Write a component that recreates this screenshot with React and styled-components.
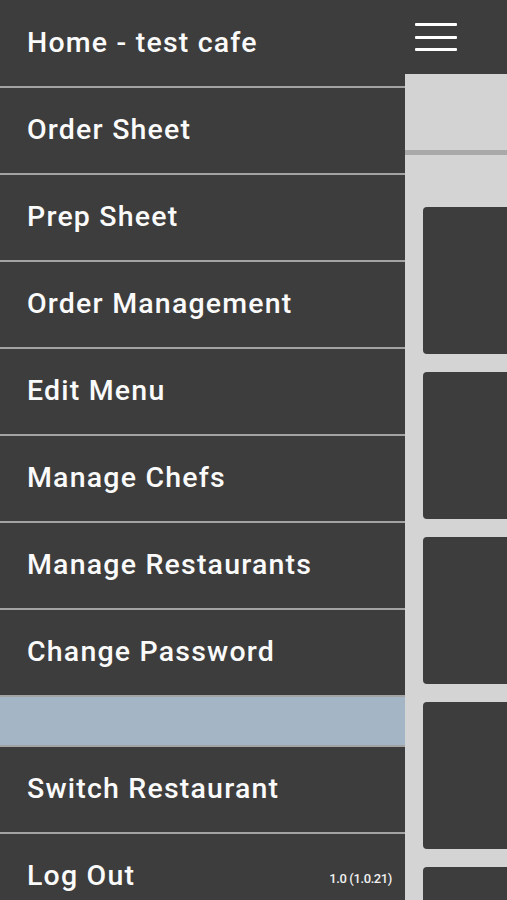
import React from 'react';
import styled, { createGlobalStyle } from 'styled-components';

const GlobalStyle = createGlobalStyle`
  html, body {
    margin: 0;
    padding: 0;
    background: #3d3d3d;
    overflow: hidden;
  }
  * { box-sizing: border-box; }
`;

const menuItems = [
  'Order Sheet',
  'Prep Sheet',
  'Order Management',
  'Edit Menu',
  'Manage Chefs',
  'Manage Restaurants',
  'Change Password',
];

const App = () => (
  <>
    <GlobalStyle />
    <Screen>
      <Drawer>
        <Row $height={86}>
          <Label>Home - test cafe</Label>
        </Row>
        {menuItems.map((item) => (
          <Row key={item} $height={87} $divider>
            <Label>{item}</Label>
          </Row>
        ))}
        <Spacer />
        <Row $height={87} $divider>
          <Label>Switch Restaurant</Label>
        </Row>
        <Row $height={87} $divider>
          <Label>Log Out</Label>
          <Version>1.0 (1.0.21)</Version>
        </Row>
      </Drawer>
      <Main>
        <TopBar>
          <Burger aria-label="menu">
            <span />
            <span />
            <span />
          </Burger>
        </TopBar>
        <SubBar />
        <CardList>
          <Card />
          <Card />
          <Card />
          <Card />
          <Card />
        </CardList>
      </Main>
    </Screen>
  </>
);

const Screen = styled.div`
  display: flex;
  width: 507px;
  height: 900px;
  overflow: hidden;
  font-family: Roboto, "Liberation Sans", sans-serif;
`;

const Drawer = styled.nav`
  width: 405px;
  flex-shrink: 0;
  display: flex;
  flex-direction: column;
  background: #3d3d3d;
`;

const Row = styled.div`
  height: ${(p) => p.$height}px;
  flex-shrink: 0;
  display: flex;
  align-items: center;
  justify-content: space-between;
  padding: 0 13px 0 27px;
  border-top: ${(p) => (p.$divider ? '2px solid #a3a3a3' : 'none')};
  background: #3d3d3d;
`;

const Label = styled.span`
  color: #fafafa;
  font-size: 28.5px;
  font-weight: 500;
  letter-spacing: 1.2px;
  margin-top: -2px;
`;

const Version = styled.span`
  color: #f0f0f0;
  font-size: 13px;
  font-weight: 500;
  letter-spacing: -0.4px;
  padding-top: 4px;
`;

const Spacer = styled.div`
  height: 50px;
  flex-shrink: 0;
  background: #a4b5c5;
  border-top: 2px solid #a3a3a3;
`;

const Main = styled.main`
  flex: 1;
  display: flex;
  flex-direction: column;
  background: #d4d4d4;
  overflow: hidden;
`;

const TopBar = styled.header`
  height: 74px;
  flex-shrink: 0;
  background: #3d3d3d;
  padding: 23px 0 0 10px;
`;

const Burger = styled.div`
  width: 42px;
  display: flex;
  flex-direction: column;
  gap: 9.5px;

  span {
    display: block;
    height: 3px;
    background: #ffffff;
    border-radius: 1px;
  }
`;

const SubBar = styled.div`
  height: 81px;
  flex-shrink: 0;
  background: #d3d3d3;
  border-bottom: 5px solid #a9a9a9;
`;

const CardList = styled.div`
  display: flex;
  flex-direction: column;
  gap: 18px;
  padding: 52px 0 0 18px;
`;

const Card = styled.div`
  height: 147px;
  flex-shrink: 0;
  margin-right: -10px;
  background: #3d3d3d;
  border-radius: 4px;
`;

export default App;
